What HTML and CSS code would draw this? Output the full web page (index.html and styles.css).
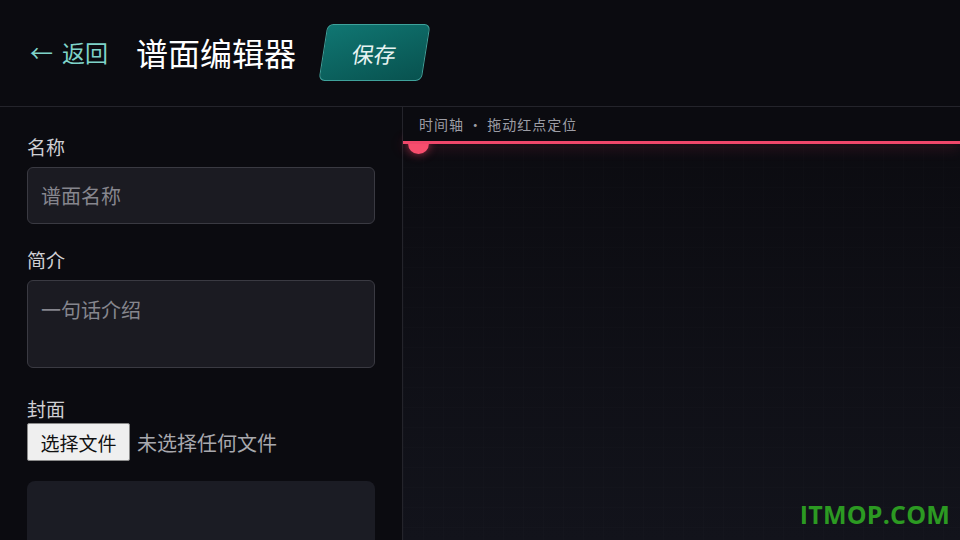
FILE: index.html
```html
<!DOCTYPE html>
<html lang="zh-CN">
<head>
    <meta charset="UTF-8">
    <meta name="viewport" content="width=device-width, initial-scale=1.0">
    <title>谱面编辑器</title>
    <link rel="stylesheet" href="styles.css">
</head>
<body>
    <div class="editor">
        <div class="top-bar">
            <a class="back-link"><span class="back-arrow">←</span>返回</a>
            <div class="page-title">谱面编辑器</div>
            <div class="save-btn"><span>保存</span></div>
        </div>

        <div class="main">
            <!-- 左侧表单 -->
            <div class="side-form">
                <div class="field-label">名称</div>
                <div class="text-input">谱面名称</div>

                <div class="field-label">简介</div>
                <div class="text-input text-area">一句话介绍</div>

                <div class="field-label cover-label">封面</div>
                <div class="file-row">
                    <button class="file-btn">选择文件</button>
                    <span class="file-name">未选择任何文件</span>
                </div>

                <div class="cover-preview"></div>
            </div>

            <!-- 时间轴 -->
            <div class="timeline">
                <div class="timeline-label">时间轴 · 拖动红点定位</div>
                <div class="track">
                    <div class="track-line"></div>
                    <div class="track-dot"></div>
                </div>
                <div class="grid-area"></div>
            </div>
        </div>

        <div class="watermark">ITMOP.COM</div>
    </div>
</body>
</html>
```

FILE: styles.css
```css
* {
    margin: 0;
    padding: 0;
    box-sizing: border-box;
}

body, html {
    height: 100%;
    background: #0b0b10;
    font-family: "Noto Sans CJK SC", "Noto Sans", sans-serif;
    overflow: hidden;
}

.editor {
    position: relative;
    height: 100vh;
    width: 100%;
    display: flex;
    flex-direction: column;
}

.top-bar {
    height: 107px;
    flex-shrink: 0;
    display: flex;
    align-items: center;
    padding-left: 30px;
    border-bottom: 1px solid #24242b;
}

.back-link {
    color: #7fd3c9;
    font-size: 23px;
    margin-right: 28px;
    margin-top: -2px;
}

.back-arrow {
    margin-right: 9px;
}

.page-title {
    color: #ffffff;
    font-size: 32px;
    margin-right: 27px;
    margin-top: -2px;
}

.save-btn {
    width: 103px;
    height: 57px;
    margin-top: -1px;
    display: flex;
    align-items: center;
    justify-content: center;
    transform: skewX(-9deg);
    background: linear-gradient(160deg, #107672 0%, #08524f 100%);
    border: 1px solid #3fa29b;
    border-radius: 6px;
    color: #e8f4f2;
    font-size: 22px;
}

.main {
    flex: 1;
    display: flex;
    min-height: 0;
}

.side-form {
    width: 403px;
    flex-shrink: 0;
    border-right: 1px solid #24242b;
    padding: 27px 27px 0 27px;
    display: flex;
    flex-direction: column;
}

.field-label {
    color: #cfcfd4;
    font-size: 19px;
    line-height: 26px;
    margin-bottom: 7px;
}

.text-input {
    width: 348px;
    height: 57px;
    background: #1b1b22;
    border: 1px solid #3a3a42;
    border-radius: 6px;
    color: #86868e;
    font-size: 20px;
    line-height: 55px;
    padding-left: 13px;
    margin-bottom: 23px;
    flex-shrink: 0;
}

.text-area {
    height: 88px;
    line-height: 28px;
    padding-top: 15px;
    margin-bottom: 28px;
}

.cover-label {
    margin-bottom: 1px;
}

.file-row {
    display: flex;
    align-items: center;
    margin-bottom: 20px;
}

.file-btn {
    width: 103px;
    height: 38px;
    background: #efefef;
    border: 1px solid #8a8a8a;
    border-radius: 2px;
    color: #111;
    font-family: inherit;
    font-size: 19px;
    margin-right: 7px;
}

.file-name {
    color: #a8a8ae;
    font-size: 20px;
}

.cover-preview {
    width: 348px;
    flex: 1;
    background: #1b1c24;
    border-radius: 8px 8px 0 0;
}

.timeline {
    flex: 1;
    display: flex;
    flex-direction: column;
    background-image:
        linear-gradient(rgba(255, 255, 255, 0.008) 1px, transparent 1px),
        linear-gradient(90deg, rgba(255, 255, 255, 0.008) 1px, transparent 1px),
        linear-gradient(180deg, #0b0b10 0%, #12131b 100%);
    background-size: 20px 20px, 20px 20px, 100% 100%;
}

.timeline-label {
    position: relative;
    z-index: 2;
    color: #9d9da5;
    font-size: 14px;
    letter-spacing: 1px;
    line-height: 20px;
    padding: 7px 0 0 16px;
    background: #0b0b10;
    height: 34px;
}

.track {
    position: relative;
    height: 4px;
}

.track-line {
    position: relative;
    z-index: 1;
    height: 3px;
    background: #f0476a;
    box-shadow: 0 2px 14px rgba(240, 60, 95, 0.45);
}

.track-dot {
    position: absolute;
    left: 5px;
    top: -8px;
    width: 21px;
    height: 21px;
    border-radius: 50%;
    background: #f7506f;
    box-shadow: 0 0 10px rgba(247, 70, 105, 0.6);
}

.grid-area {
    flex: 1;
}

.watermark {
    position: absolute;
    right: 10px;
    bottom: 9px;
    color: #2c9a22;
    font-family: "Open Sans", sans-serif;
    font-weight: 700;
    font-size: 25px;
    letter-spacing: 0.2px;
}
```
